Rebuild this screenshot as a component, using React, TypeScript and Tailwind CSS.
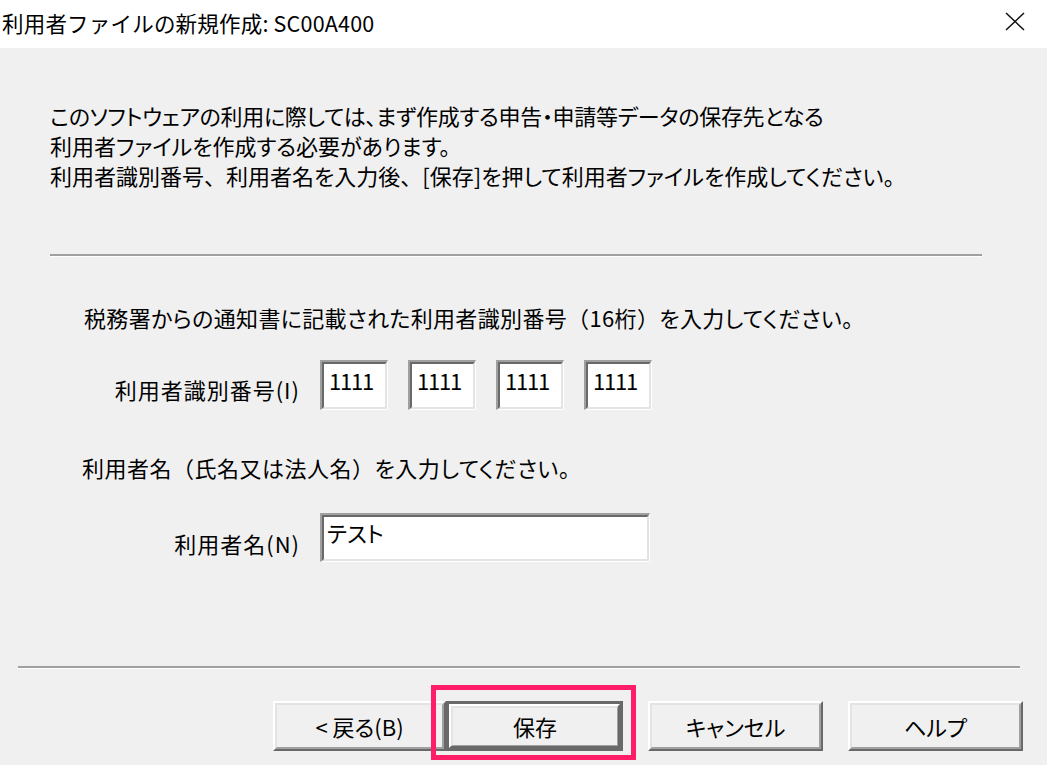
import React from "react";

const jp = "font-['Noto_Sans_CJK_JP',sans-serif] [font-feature-settings:'palt']";

// full-width punctuation (no proportional squeeze), like the dialog font
function W({ children }: { children: React.ReactNode }) {
  return <span className="[font-feature-settings:normal]">{children}</span>;
}

function Separator({ className }: { className: string }) {
  return <div className={`border-t-2 border-b border-t-[#a0a0a0] border-b-white ${className}`} />;
}

function SunkenBox({ className, children }: { className: string; children?: React.ReactNode }) {
  return (
    <div className={`border-t-2 border-l-2 border-r border-b border-t-[#a0a0a0] border-l-[#a0a0a0] border-r-white border-b-white ${className}`}>
      <div className="h-full w-full border-2 border-t-[#696969] border-l-[#696969] border-r-[#e3e3e3] border-b-[#e3e3e3] bg-white">
        {children}
      </div>
    </div>
  );
}

function Button({ label, width }: { label: string; width: string }) {
  return (
    <div className={`h-[50px] ${width} border-2 border-t-white border-l-white border-r-[#696969] border-b-[#696969]`}>
      <div className="flex h-full w-full items-center justify-center border-2 border-t-[#e3e3e3] border-l-[#e3e3e3] border-r-[#a0a0a0] border-b-[#a0a0a0] bg-[#f0f0f0] text-[22px] leading-none text-black">
        {label}
      </div>
    </div>
  );
}

function DefaultButton({ label }: { label: string }) {
  return (
    <div className="h-[50px] w-[177px] border-[3px] border-[#696969]">
      <div className="h-full w-full border-2 border-t-white border-l-white border-r-[#696969] border-b-[#696969]">
        <div className="flex h-full w-full items-center justify-center border-t-2 border-l-2 border-r border-b border-t-[#e3e3e3] border-l-[#e3e3e3] border-r-[#a0a0a0] border-b-[#a0a0a0] bg-[#f0f0f0] pb-[2px] text-[22px] leading-none text-black">
          {label}
        </div>
      </div>
    </div>
  );
}

export default function App() {
  const idParts = ["1111", "1111", "1111", "1111"];

  return (
    <div className={`relative h-[765px] w-[1047px] overflow-hidden bg-[#f0f0f0] text-black ${jp}`}>
      <header className="flex h-[48px] items-start justify-between bg-white pl-[2px] pr-[22px]">
        <div className="mt-[8px] text-[21.5px] leading-[30px] tracking-[0.2px] [font-feature-settings:normal]">
          利用者ファイルの新規作成: SC00A400
        </div>
        <svg className="mt-[12px]" width="20" height="19" viewBox="0 0 20 19" fill="none">
          <path d="M1 1 L19 18 M19 1 L1 18" stroke="#111" strokeWidth="1.5" />
        </svg>
      </header>

      <main className="flex flex-col">
        <p className="ml-[50px] mt-[52px] text-[22px] leading-[30px]">
          <span className="tracking-[-0.3px]">
            このソフトウェアの利用に際しては、まず作成する申告・申請等データの保存先となる
          </span>
          <br />
          利用者ファイルを作成する必要があります。
          <br />
          利用者識別番号<W>、</W>利用者名を入力後<W>、</W>[保存]を押して利用者ファイルを作成してください。
        </p>

        <Separator className="ml-[50px] mt-[64px] w-[932px]" />

        <div className="ml-[84px] mt-[45px] text-[22px] leading-[30px] tracking-[0.35px]">
          税務署からの通知書に記載された利用者識別番号<W>（</W>16桁<W>）</W>を入力してください。
        </div>

        <div className="mt-[28px] flex items-start">
          <div className="w-[300px] pt-[14px] text-right text-[22px] leading-[30px] tracking-[1px]">利用者識別番号(I)</div>
          <div className="ml-[20px] flex gap-[20px]">
            {idParts.map((v, i) => (
              <SunkenBox key={i} className="h-[50px] w-[68px]">
                <div className="pl-[5px] pt-[1px] text-[22px] leading-[30px] tracking-[-1.2px]">{v}</div>
              </SunkenBox>
            ))}
          </div>
        </div>

        <div className="ml-[82px] mt-[42px] text-[22px] leading-[30px] tracking-[0.5px]">
          利用者名<W>（</W>氏名又は法人名<W>）</W>を入力してください。
        </div>

        <div className="mt-[31px] flex items-start">
          <div className="w-[300px] pt-[15px] text-right text-[22px] leading-[30px] tracking-[1px]">利用者名(N)</div>
          <SunkenBox className="ml-[20px] h-[49px] w-[330px]">
            <div className="pl-[3px] pt-0 text-[22px] leading-[30px]">テスト</div>
          </SunkenBox>
        </div>

        <Separator className="ml-[18px] mt-[104px] w-[1002px]" />

        <div className="ml-[273px] mt-[32px] flex">
          <Button label="< 戻る(B)" width="w-[173px]" />
          <DefaultButton label="保存" />
          <div className="ml-[25px]">
            <Button label="キャンセル" width="w-[175px]" />
          </div>
          <div className="ml-[25px]">
            <Button label="ヘルプ" width="w-[175px]" />
          </div>
        </div>
      </main>

      <div className="pointer-events-none absolute left-[431px] top-[685px] h-[75px] w-[205px] border-[5px] border-[#ff1d68]" />
    </div>
  );
}
